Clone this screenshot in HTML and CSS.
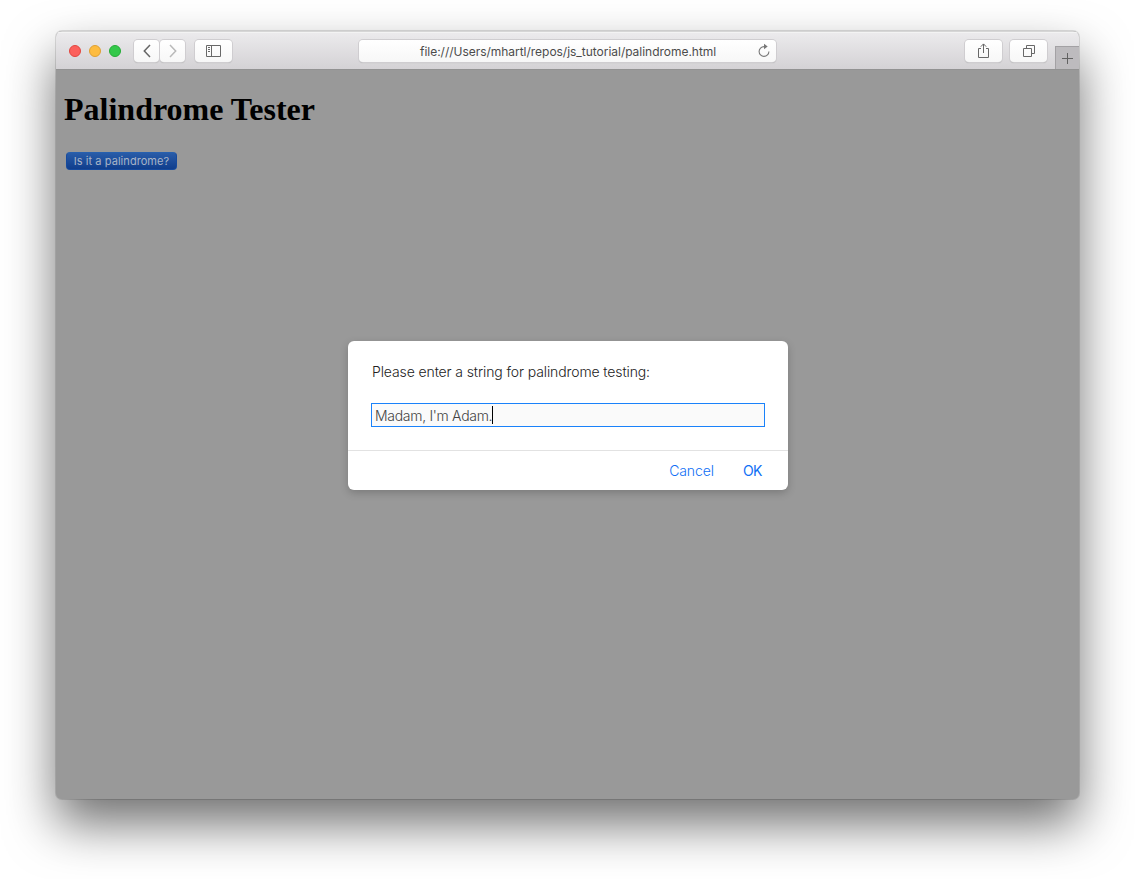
FILE: index.html
```html
<!DOCTYPE html>
<html lang="en">
<head>
<meta charset="utf-8">
<title>Palindrome Tester</title>
<link rel="stylesheet" href="styles.css">
</head>
<body>
<div class="window">
  <header class="toolbar">
    <div class="lights"><span class="light close"></span><span class="light minimize"></span><span class="light expand"></span></div>
    <div class="nav">
      <span class="tool"><svg width="26" height="22" viewBox="0 0 26 22"><path d="M16 5L10.300 11l5.700 6" stroke="#666" stroke-width="1.500"/></svg></span>
      <span class="tool"><svg width="26" height="22" viewBox="0 0 26 22"><path d="M10 5l5.700 6-5.700 6" stroke="#b9b9b9" stroke-width="1.500"/></svg></span>
    </div>
    <span class="tool wide"><svg width="37" height="22" viewBox="0 0 37 22"><path d="M11.500 5.500h14v11h-14zM16.500 5.500v11M13 7.500h2M13 9.500h2M13 11.500h2" stroke="#686868"/></svg></span>
    <div class="address"><span class="url">file:///Users/mhartl/repos/js_tutorial/palindrome.html</span>
      <svg class="reload" width="14" height="16" viewBox="0 0 14 16"><path d="M8 3.600H7A4.900 4.900 0 1 0 11.900 8.500" stroke="#777" stroke-width="1.100"/><path d="M7 .8l3.700 2.800L7 6.200z" fill="#777"/></svg>
    </div>
    <div class="actions">
      <span class="tool wide"><svg width="37" height="22" viewBox="0 0 37 22"><path d="M16 8.500h-2.500v9h10v-9H21M18.500 13V4M15.800 6.700l2.700-2.800 2.700 2.800" stroke="#686868"/></svg></span>
      <span class="tool wide"><svg width="37" height="22" viewBox="0 0 37 22"><path d="M13.500 8.500h8v8h-8zM16.500 8V5.500h8v8H22" stroke="#686868"/></svg></span>
    </div>
    <span class="newtab"><svg width="23" height="22" viewBox="0 0 23 22"><path d="M11.500 6v11M6 11.500h11" stroke="#626262"/></svg></span>
  </header>
  <main class="page">
    <h1 class="title">Palindrome Tester</h1>
    <button class="test"><span class="test-label">Is it a palindrome?</span></button>
    <section class="dialog">
      <div class="dialog-body">
        <p class="prompt"><span class="prompt-text">Please enter a string for palindrome testing:</span></p>
        <div class="field"><span class="value">Madam, I'm Adam.</span><span class="caret"></span></div>
      </div>
      <footer class="dialog-actions"><span class="cancel">Cancel</span><span class="ok">OK</span></footer>
    </section>
  </main>
</div>
</body>
</html>
```
FILE: styles.css
```css
* { box-sizing: border-box; }
body { margin: 0; height: 879px; overflow: hidden; padding: 31px 0 0 56px; background: #fff; font-family: Inter, "Liberation Sans", sans-serif; }
svg { display: block; flex: none; fill: none; }
.window { width: 1023px; height: 768px; border-radius: 6px; background: #999; box-shadow: 0 0 0 1px rgba(0,0,0,.12), 0 25px 50px rgba(0,0,0,.56); display: flex; flex-direction: column; overflow: hidden; }
.toolbar { height: 39px; flex: none; display: flex; align-items: flex-start; padding: 8px 0 0 13px; background: linear-gradient(#ecebed, #d4d2d5); border-top: 1px solid #d6d6d6; border-bottom: 1px solid #929292; box-shadow: inset 0 1px #f3f3f3; }
.lights { display: flex; gap: 8px; padding-top: 5px; width: 65px; }
.light { width: 12px; height: 12px; border-radius: 50%; border: 1px solid #e2463f; background: #fc605c; }
.minimize { background: #fdbc40; border-color: #dfa032; }
.expand { background: #34c84a; border-color: #25ac36; }
.nav { display: flex; gap: 1px; margin-right: 10px; }
.tool { width: 25px; height: 22px; border-radius: 4px; background: linear-gradient(#fff, #f7f7f7); box-shadow: 0 0 0 1px #cfcdd0, 0 1px 1px #aaa; display: flex; justify-content: center; }
.wide { width: 37px; }
.address { width: 417px; height: 22px; margin-left: 127px; border-radius: 4px; background: linear-gradient(#fff, #f7f7f7); box-shadow: 0 0 0 1px #cfcdd0, 0 1px 1px #aaa; display: flex; justify-content: space-between; padding: 0 5px 0 61px; }
.url { font-size: 12px; letter-spacing: -.025px; line-height: 23px; color: #4b4b4b; white-space: nowrap; }
.reload { margin-top: 3px; }
.actions { display: flex; gap: 8px; margin-left: 189px; }
.newtab { width: 24px; height: 23px; margin: 6px 0 0 auto; background: #bdbbbe; border: solid #a3a1a4; border-width: 1px 0 0 1px; }
.page { flex: 1; padding: 21px 8px 0; display: flex; flex-direction: column; }
.title { font: bold 32px/37px "Liberation Serif", serif; margin: 0; color: #000; }
.test { width: 111px; height: 18px; margin: 24px 0 0 2px; padding: 0; border: 1px solid #164a9d; border-top-color: #2760ae; border-radius: 4px; background: linear-gradient(#295ca8, #103e8d); color: #a8b4c7; font: 11px/16px Inter, sans-serif; letter-spacing: .06px; text-align: center; white-space: nowrap; }
.dialog { width: 440px; height: 149px; margin: 171px 0 0 284px; border-radius: 6px; background: #fff; box-shadow: 0 3px 9px rgba(0,0,0,.2); }
.dialog-body { height: 110px; padding: 21px 23px 0; border-bottom: 1px solid #e2e2e2; }
.prompt { margin: 0 0 21px 1px; font-size: 14px; letter-spacing: -.11px; font-weight: 300; line-height: 20px; color: #222; white-space: nowrap; }
.field { width: 394px; height: 24px; display: flex; align-items: center; border: 1px solid #1a82fa; background: #fafafa; padding-left: 3px; font-size: 14px; letter-spacing: -.3px; font-weight: 300; color: #444; }
.caret { width: 1px; height: 18px; background: #000; }
.dialog-actions { display: flex; justify-content: flex-end; gap: 29px; padding: 10px 26px 0 0; font-size: 14px; letter-spacing: -.1px; font-weight: 300; line-height: 20px; color: #0f70f5; }
.ok { font-weight: 400; letter-spacing: -.5px; }
```
